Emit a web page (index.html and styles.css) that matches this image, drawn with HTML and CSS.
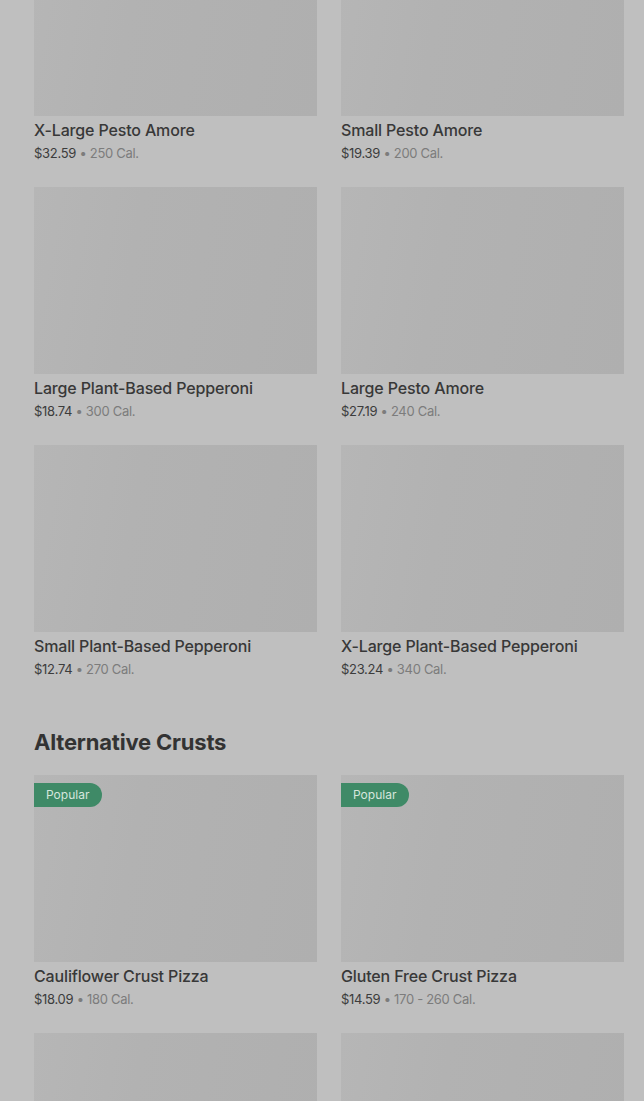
FILE: index.html
```html
<!DOCTYPE html>
<html lang="en">
<head>
<meta charset="utf-8">
<title>Menu</title>
<link rel="stylesheet" href="styles.css">
</head>
<body>
<main class="page">
  <section class="grid grid-first">
    <article class="card">
      <div class="thumb"></div>
      <h3 class="name">X-Large Pesto Amore</h3>
      <p class="meta"><span class="price">$32.59</span> <span class="cal">• 250 Cal.</span></p>
    </article>
    <article class="card">
      <div class="thumb"></div>
      <h3 class="name">Small Pesto Amore</h3>
      <p class="meta"><span class="price">$19.39</span> <span class="cal">• 200 Cal.</span></p>
    </article>
    <article class="card">
      <div class="thumb"></div>
      <h3 class="name">Large Plant-Based Pepperoni</h3>
      <p class="meta"><span class="price">$18.74</span> <span class="cal">• 300 Cal.</span></p>
    </article>
    <article class="card">
      <div class="thumb"></div>
      <h3 class="name">Large Pesto Amore</h3>
      <p class="meta"><span class="price">$27.19</span> <span class="cal">• 240 Cal.</span></p>
    </article>
    <article class="card">
      <div class="thumb"></div>
      <h3 class="name">Small Plant-Based Pepperoni</h3>
      <p class="meta"><span class="price">$12.74</span> <span class="cal">• 270 Cal.</span></p>
    </article>
    <article class="card">
      <div class="thumb"></div>
      <h3 class="name">X-Large Plant-Based Pepperoni</h3>
      <p class="meta"><span class="price">$23.24</span> <span class="cal">• 340 Cal.</span></p>
    </article>
  </section>

  <h2 class="section-title">Alternative Crusts</h2>

  <section class="grid">
    <article class="card">
      <div class="thumb"><span class="badge">Popular</span></div>
      <h3 class="name">Cauliflower Crust Pizza</h3>
      <p class="meta"><span class="price">$18.09</span> <span class="cal">• 180 Cal.</span></p>
    </article>
    <article class="card">
      <div class="thumb"><span class="badge">Popular</span></div>
      <h3 class="name">Gluten Free Crust Pizza</h3>
      <p class="meta"><span class="price">$14.59</span> <span class="cal">• 170 - 260 Cal.</span></p>
    </article>
    <article class="card">
      <div class="thumb"></div>
    </article>
    <article class="card">
      <div class="thumb"></div>
    </article>
  </section>
</main>
</body>
</html>
```

FILE: styles.css
```css
html, body {
  margin: 0;
  padding: 0;
  background: #bfbfbf;
  overflow: hidden;
}

body {
  font-family: Inter, "Liberation Sans", Arial, sans-serif;
  color: #383838;
}

.page {
  padding: 0 20px 40px 34px;
}

.grid {
  display: grid;
  grid-template-columns: 283px 283px;
  column-gap: 24px;
  row-gap: 25px;
}

.grid-first {
  margin-top: -71px;
}

.card {
  display: flex;
  flex-direction: column;
}

.thumb {
  position: relative;
  height: 187px;
  background: linear-gradient(100deg, #b6b6b6 0%, #b2b2b2 35%, #afafaf 100%);
}

.badge {
  position: absolute;
  top: 8px;
  left: 0;
  height: 24px;
  padding: 0 13px 0 12px;
  border-radius: 0 12px 12px 0;
  background: #3f8a67;
  color: #d6e6dd;
  font-size: 12px;
  line-height: 24px;
}

.name {
  margin: 4px 0 0;
  font-size: 16px;
  line-height: 20px;
  font-weight: 500;
  letter-spacing: -0.15px;
  color: #383838;
  white-space: nowrap;
}

.meta {
  margin: 4px 0 0;
  font-size: 13px;
  line-height: 18px;
  letter-spacing: -0.3px;
  white-space: nowrap;
}

.price {
  color: #3c3c3c;
}

.cal {
  color: #7c7c7c;
}

.section-title {
  margin: 50px 0 19px;
  font-size: 22px;
  line-height: 28px;
  font-weight: 700;
  color: #333333;
  letter-spacing: -0.2px;
}
```
